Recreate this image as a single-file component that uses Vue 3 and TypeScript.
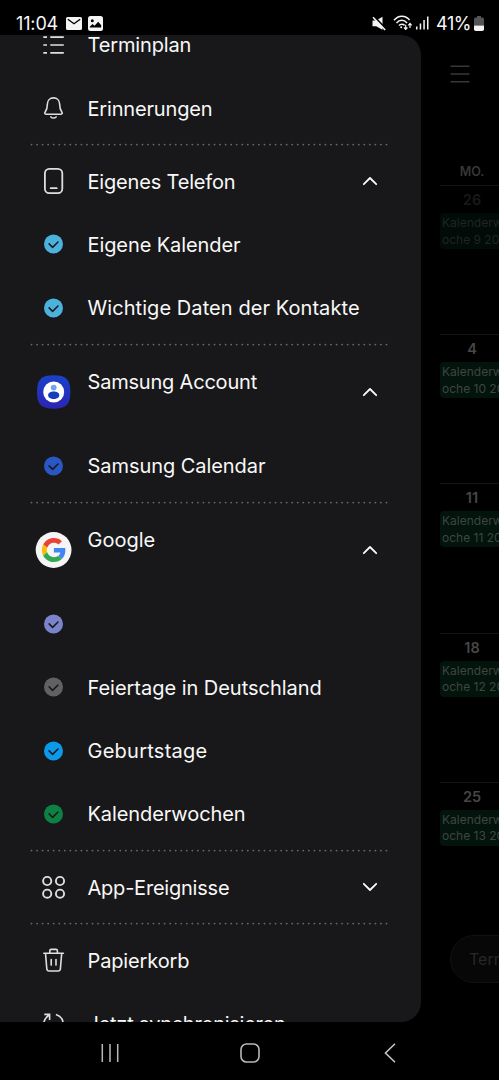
<script setup lang="ts">
type Icon = 'list' | 'bell' | 'phone' | 'check' | 'samsung' | 'google' | 'apps' | 'trash' | 'sync'
interface Entry {
  label?: string
  icon?: Icon
  color?: string
  chevron?: 'up' | 'down'
  tall?: boolean
  divider?: boolean
  track?: number
}

const divider: Entry = { divider: true }
const entries: Entry[] = [
  { label: 'Terminplan', icon: 'list', track: -0.15 },
  { label: 'Erinnerungen', icon: 'bell', track: -0.17 },
  divider,
  { label: 'Eigenes Telefon', icon: 'phone', chevron: 'up', track: -0.18 },
  { label: 'Eigene Kalender', icon: 'check', color: '#4ab2dc', track: -0.09 },
  { label: 'Wichtige Daten der Kontakte', icon: 'check', color: '#4ab2dc', track: 0.07 },
  divider,
  { label: 'Samsung Account', icon: 'samsung', chevron: 'up', tall: true, track: -0.2 },
  { label: 'Samsung Calendar', icon: 'check', color: '#2b57c5', track: -0.06 },
  divider,
  { label: 'Google', icon: 'google', chevron: 'up', tall: true },
  { label: '', icon: 'check', color: '#7b84cb' },
  { label: 'Feiertage in Deutschland', icon: 'check', color: '#616161', track: -0.03 },
  { label: 'Geburtstage', icon: 'check', color: '#0b9aea', track: 0.25 },
  { label: 'Kalenderwochen', icon: 'check', color: '#0d8043', track: -0.09 },
  divider,
  { label: 'App-Ereignisse', icon: 'apps', chevron: 'down', track: -0.22 },
  divider,
  { label: 'Papierkorb', icon: 'trash', track: -0.13 },
  { label: 'Jetzt synchronisieren', icon: 'sync', track: -0.25 },
]

const weeks = [
  { day: 26, week: 9, past: true },
  { day: 4, week: 10, past: false },
  { day: 11, week: 11, past: false },
  { day: 18, week: 12, past: false },
  { day: 25, week: 13, past: false },
]
</script>

<template>
  <div class="screen">
    <header class="status">
      <span class="time">11:04</span>
      <svg class="mail" width="16" height="13" viewBox="0 0 16 13">
        <rect width="16" height="13" rx="1.6" fill="#f4f4f4" />
        <path d="M1.8 2.2 8 6.7l6.200-4.500" fill="none" stroke="#000" stroke-width="1.400" />
      </svg>
      <svg class="photo" width="15" height="15" viewBox="0 0 15 15">
        <rect width="15" height="15" rx="2.500" fill="#f4f4f4" />
        <circle cx="4.300" cy="4.700" r="1.500" fill="#000" />
        <path d="M1.800 10.800 4.500 8l2 1.800 3.700-4 3 3.400v2.200H1.800z" fill="#000" />
      </svg>
      <span class="gap"></span>
      <svg class="mute" width="15" height="15" viewBox="0 0 15 15">
        <path d="M.5 4.600h3.700L10.500.8v13L4.200 10.300H.5z" fill="#f4f4f4" />
        <path d="M2.200.6 14.300 13.200" stroke="#000" stroke-width="1.800" />
        <path d="M1 1.200 13.200 14" stroke="#f4f4f4" stroke-width="1.600" />
      </svg>
      <svg class="wifi" width="20" height="16" viewBox="0 0 20 16" fill="none" stroke="#f4f4f4" stroke-width="1.500">
        <path d="M1 5.300c4.400-5.400 11.400-5.400 15.600-.2M3.500 8c3-3.600 7.600-3.600 10.500 0M6 10.600c1.700-1.900 3.900-1.900 5.600-.2" />
        <circle cx="8.200" cy="12.300" r="1" fill="#f4f4f4" stroke="none" />
        <path d="M12.700 9.800v4.400M11 12.500l1.700 1.900 1.700-1.900M17 13V8.600M15.300 10.300 17 8.400l1.700 1.900" stroke-width="1.200" />
      </svg>
      <svg class="signal" width="13" height="14" viewBox="0 0 13 14" fill="#f4f4f4">
        <rect x="0" y="10.500" width="1.500" height="3" /><rect x="3.700" y="7.500" width="1.500" height="6" />
        <rect x="7.300" y="4" width="1.500" height="9.500" /><rect x="11" y=".5" width="1.500" height="13" />
      </svg>
      <span class="percent">41%</span>
      <svg class="battery" width="10" height="15" viewBox="0 0 10 15">
        <path d="M3 0h4v1.500h1.200Q10 1.500 10 3.300V9.500H0V3.300Q0 1.500 1.800 1.500H3z" fill="#555" />
        <path d="M0 9.400h10v3.800Q10 15 8.200 15H1.800Q0 15 0 13.200z" fill="#f4f4f4" />
      </svg>
    </header>

    <main class="body">
      <nav class="drawer">
        <div class="entries">
          <template v-for="(e, i) in entries" :key="i">
            <svg v-if="e.divider" class="divider" width="421" height="9.850" viewBox="0 0 421 9.850">
              <path d="M31.400 4.600H387" stroke="#68686b" stroke-width="1.900" stroke-linecap="round" stroke-dasharray="0 5.550" />
            </svg>
            <div v-else class="row" :class="{ tall: e.tall }">
              <div class="icon">
                <svg v-if="e.icon === 'check'" width="20" height="20" viewBox="0 0 20 20">
                  <circle cx="9.500" cy="10" r="9.500" :fill="e.color" />
                  <path d="m5.100 9.900 3.500 3.500 5.400-5.400" fill="none" stroke="#18181a" stroke-width="1.500" stroke-linecap="round" stroke-linejoin="round" />
                </svg>
                <svg v-else-if="e.icon === 'list'" width="22" height="20" viewBox="0.500 0 22 20" stroke="#dededf" stroke-width="1.700">
                  <path d="M.8 2.200h3.700M7.800 2.200H21.300M.8 10h3.700M7.800 10H21.300M.8 17.800h3.700M7.800 17.800H21.300" />
                </svg>
                <svg v-else-if="e.icon === 'bell'" width="20" height="22" viewBox="0.500 0 20 22" fill="none" stroke="#dededf" stroke-width="1.600" stroke-linejoin="round" stroke-linecap="round">
                  <path d="M10 .9C6.300.9 3.900 3.600 3.900 7.100c0 4.400-.8 6.100-2.300 8.100-.7 1-.3 2 .8 2h15.200c1.100 0 1.500-1 .8-2-1.500-2-2.300-3.700-2.300-8.100C16.100 3.600 13.700.9 10 .9z" />
                  <path d="M7.400 19.900c1.300 1.500 3.900 1.500 5.200 0" />
                </svg>
                <svg v-else-if="e.icon === 'phone'" width="20" height="26" viewBox="0.400 0 20 26" fill="none" stroke="#dededf">
                  <rect x="1.300" y=".9" width="17.400" height="24.200" rx="4.400" stroke-width="1.800" />
                  <path d="M7.100 20.200h6" stroke-width="1.800" stroke-linecap="round" />
                </svg>
                <svg v-else-if="e.icon === 'samsung'" width="34" height="34" viewBox="0.300 0 34 34">
                  <defs>
                    <linearGradient id="account" x1="0" y1="0" x2="0" y2="1">
                      <stop offset="0" stop-color="#1a42c9" /><stop offset="1" stop-color="#2b25b1" />
                    </linearGradient>
                  </defs>
                  <path d="M17 .3c12.500 0 16.700 4.200 16.700 16.700S29.500 33.700 17 33.700.3 29.500.3 17 4.500.3 17 .3z" fill="url(#account)" />
                  <circle cx="17" cy="17" r="10.500" fill="#fff" />
                  <circle cx="17" cy="12.600" r="2.900" fill="#70a5ec" />
                  <path d="M11.400 20.200c0-2.200 2.500-3.600 5.600-3.600s5.600 1.400 5.600 3.600-2.500 3.700-5.600 3.700-5.600-1.500-5.600-3.700z" fill="#173fbd" />
                </svg>
                <svg v-else-if="e.icon === 'google'" class="google" width="36" height="36" viewBox="0 0 36 36">
                  <circle cx="17.600" cy="18" r="17.900" fill="#f5f5f6" />
                  <g transform="translate(5.900 6) scale(.5)">
                    <path fill="#EA4335" d="M24 9.500c3.540 0 6.710 1.220 9.210 3.600l6.850-6.850C35.900 2.380 30.470 0 24 0 14.620 0 6.510 5.380 2.560 13.220l7.980 6.190C12.430 13.720 17.740 9.500 24 9.500z" />
                    <path fill="#4285F4" d="M46.980 24.550c0-1.570-.15-3.090-.38-4.550H24v9.020h12.940c-.58 2.960-2.260 5.480-4.780 7.180l7.730 6c4.510-4.180 7.090-10.360 7.090-17.650z" />
                    <path fill="#FBBC05" d="M10.530 28.590c-.48-1.450-.76-2.990-.76-4.590s.27-3.140.76-4.590l-7.980-6.190C.92 16.460 0 20.120 0 24c0 3.880.92 7.540 2.560 10.780l7.970-6.190z" />
                    <path fill="#34A853" d="M24 48c6.480 0 11.930-2.130 15.890-5.810l-7.730-6c-2.150 1.450-4.920 2.300-8.160 2.300-6.260 0-11.570-4.220-13.470-9.910l-7.980 6.190C6.510 42.620 14.620 48 24 48z" />
                  </g>
                </svg>
                <svg v-else-if="e.icon === 'apps'" width="24" height="24" viewBox="0.400 -0.400 24 24" fill="none" stroke="#dededf" stroke-width="1.900">
                  <circle cx="5.600" cy="5.600" r="4.100" /><circle cx="18.400" cy="5.600" r="4.100" />
                  <circle cx="5.600" cy="18.300" r="4.100" /><circle cx="18.400" cy="18.300" r="4.100" />
                </svg>
                <svg v-else-if="e.icon === 'trash'" width="22" height="24" viewBox="0.400 -0.200 22 24" fill="none" stroke="#dededf" stroke-width="1.600" stroke-linejoin="round" stroke-linecap="round">
                  <path d="M1.200 5h19.600M7.200 4.800V2.600Q7.200 1.200 8.600 1.200h4.800q1.400 0 1.400 1.400v2.200M2.900 5.200l1.300 15.300q.2 2.300 2.500 2.300h8.600q2.300 0 2.500-2.300L19.100 5.200M8.600 11.300v5.600M13.400 11.300v5.600" />
                </svg>
                <svg v-else width="22" height="22" viewBox="0.300 0.300 22 22" fill="none" stroke="#dededf" stroke-width="1.600">
                  <path d="M7.500 20C-.8 16.500-1.200 8 6.300 2.300M1.600 1.700h5.300v5.500M13.200 1.700c8.800 3 9.800 13.200 2 18.200" />
                </svg>
              </div>
              <span class="label" :style="{ letterSpacing: (e.track ?? 0) + 'px' }">{{ e.label }}</span>
              <svg v-if="e.chevron" class="chevron" :class="e.chevron" width="16" height="10" viewBox="0 0 16 10">
                <path d="M1.800 8.200 8 2l6.200 6.200" fill="none" stroke="#fafafa" stroke-width="1.800" stroke-linecap="round" stroke-linejoin="round" />
              </svg>
            </div>
          </template>
        </div>
      </nav>

      <section class="calendar">
        <svg class="menu" width="20" height="18" viewBox="0 0 20 18" stroke="#373737" stroke-width="1.500">
          <path d="M.5 1.200h19M.5 9h19M.5 16.800h19" />
        </svg>
        <div class="weekday">MO.</div>
        <div v-for="w in weeks" :key="w.day" class="week" :class="{ past: w.past }">
          <div class="day">{{ w.day }}</div>
          <div class="event">Kalenderw<br />oche {{ w.week }} 20</div>
        </div>
        <div class="add">Term</div>
      </section>
    </main>

    <footer class="navbar">
      <svg width="20" height="20" viewBox="0 0 20 20" stroke="#b8b8b8" stroke-width="1.500">
        <path d="M2.300 1v18M10 1v18M17.700 1v18" />
      </svg>
      <svg width="20" height="20" viewBox="0 0 20 20">
        <rect x="1" y="1" width="18" height="18" rx="5.500" fill="none" stroke="#b8b8b8" stroke-width="1.600" />
      </svg>
      <svg width="20" height="20" viewBox="0 0 20 20">
        <path d="M15 .8 5.500 10l9.500 9.200" fill="none" stroke="#c4c4c4" stroke-width="1.600" />
      </svg>
    </footer>
  </div>
</template>

<style>
html,
body {
  background: #000;
  overflow: hidden;
}
</style>

<style scoped>
.screen {
  width: 499px;
  height: 1080px;
  overflow: hidden;
  display: flex;
  flex-direction: column;
  background: #000;
  color: #f8f8f8;
  font-family: Inter, Roboto, sans-serif;
}
.status {
  flex: none;
  height: 35px;
  padding: 12px 15px 0 16px;
  box-sizing: border-box;
  display: flex;
  align-items: flex-start;
}
.status svg {
  flex: none;
}
.time,
.percent {
  font-size: 18px;
  line-height: 24px;
  height: 24px;
}
.time {
  width: 49.500px;
  letter-spacing: -0.150px;
  white-space: nowrap;
}
.mail {
  margin-top: 5px;
}
.photo {
  margin: 4px 0 0 6px;
}
.gap {
  flex: 1;
}
.mute {
  margin-top: 4px;
}
.wifi {
  margin: 3px 0 0 6px;
}
.signal {
  margin: 4px 0 0 3px;
}
.percent {
  width: 37px;
  margin: 0 0 0 7px;
  letter-spacing: -0.400px;
  white-space: nowrap;
}
.battery {
  margin: 4px 0 0 1px;
}
.body {
  flex: none;
  height: 987px;
  display: flex;
}
.drawer {
  flex: none;
  width: 421px;
  height: 987px;
  overflow: hidden;
  background: #18181a;
  border-radius: 0 20px 20px 0;
}
.entries {
  margin-top: -21.400px;
}
.divider {
  display: block;
}
.row {
  display: flex;
  align-items: center;
  height: 63.300px;
  padding-right: 43px;
}
.row.tall {
  height: 85px;
}
.icon {
  width: 36px;
  margin: 0 15.500px 1px 36px;
  display: flex;
  justify-content: center;
}
.icon svg {
  flex: none;
}
.google {
  overflow: visible;
}
.label {
  flex: 1;
  font-size: 20px;
  line-height: 24px;
  white-space: nowrap;
}
.tall .label {
  margin-bottom: 20px;
}
.chevron {
  margin-bottom: 1px;
}
.chevron.down {
  transform: rotate(180deg);
}
.calendar {
  flex: 1;
  min-width: 0;
  padding-left: 19px;
  overflow: hidden;
  display: flex;
  flex-direction: column;
}
.menu {
  flex: none;
  margin: 30px 0 0 10px;
}
.weekday {
  flex: none;
  width: 64px;
  margin-top: 80px;
  height: 22px;
  line-height: 17px;
  font-size: 12.500px;
  font-weight: 600;
  text-align: center;
  color: #373737;
}
.week {
  flex: none;
  box-sizing: border-box;
  height: 149.200px;
  border-top: 1px solid #151515;
}
.day {
  width: 64px;
  height: 27px;
  line-height: 28px;
  text-align: center;
  font-size: 14.500px;
  font-weight: 600;
  color: #474747;
}
.event {
  width: 80px;
  height: 36px;
  padding: 2px 0 0 2px;
  box-sizing: border-box;
  border-radius: 4px;
  background: #02140c;
  color: #3f4642;
  font-size: 12px;
  line-height: 16.500px;
  white-space: nowrap;
}
.past .day {
  color: #191919;
}
.past .event {
  background: #010b07;
  color: #202523;
}
.add {
  flex: none;
  box-sizing: border-box;
  width: 100px;
  height: 48px;
  margin: 4px 0 0 10px;
  padding-left: 18px;
  border: 1px solid #111;
  border-radius: 24px;
  background: #070707;
  color: #272727;
  font-size: 16px;
  line-height: 47px;
}
.navbar {
  flex: 1;
  display: flex;
  align-items: center;
  gap: 120px;
  padding: 3px 0 0 100px;
}
</style>
